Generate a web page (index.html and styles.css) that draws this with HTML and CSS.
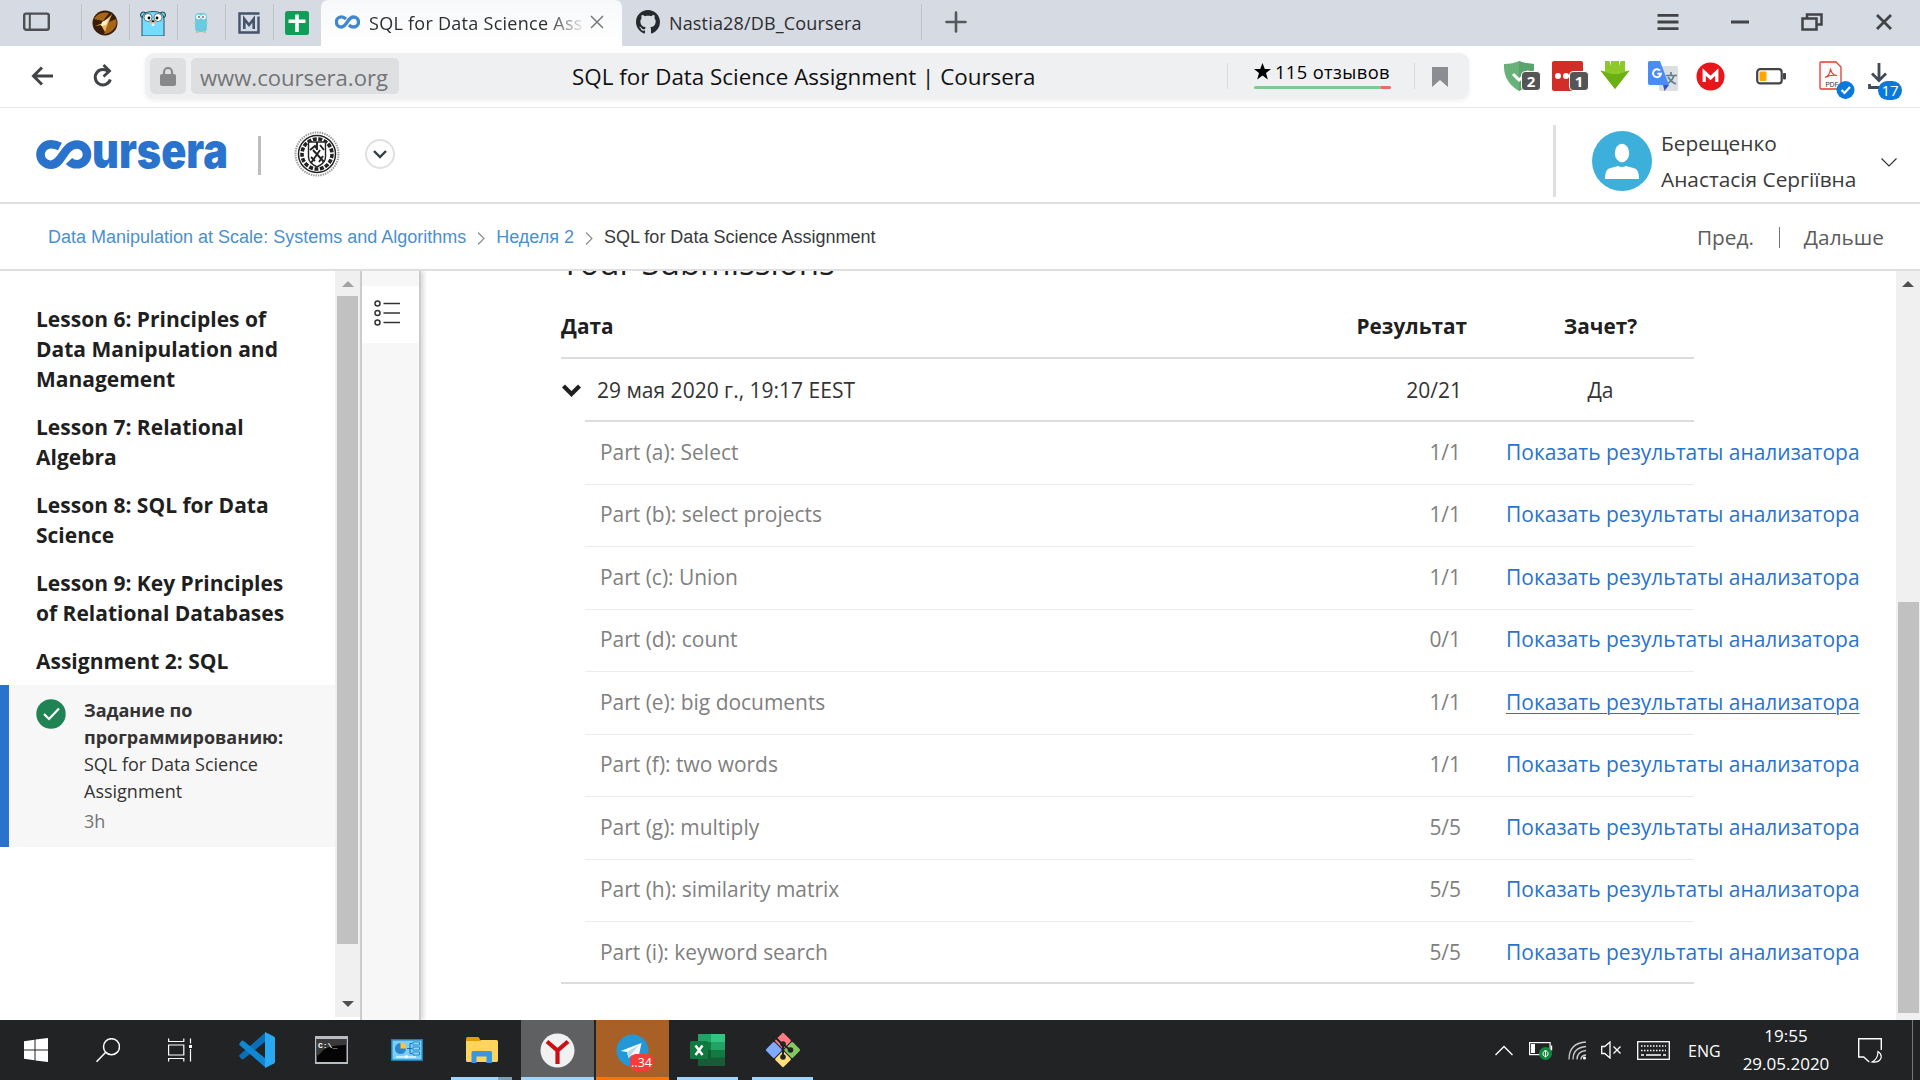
FILE: index.html
```html
<!DOCTYPE html>
<html lang="ru">
<head>
<meta charset="utf-8">
<title>SQL for Data Science Assignment | Coursera</title>
<link rel="stylesheet" href="styles.css">
</head>
<body>
<div class="screen">

<div class="tabstrip">
  <div class="panel-toggle"><svg width="28" height="20" viewBox="0 0 28 20" fill="none" stroke="#4d4f53" stroke-width="2.4"><rect x="1.2" y="1.6" width="24.6" height="16.2" rx="2"/><path d="M6.8 2v16" stroke-width="2"/></svg></div>
  <div class="pin"><svg width="26" height="26" viewBox="0 0 26 26"><circle cx="13" cy="13" r="12.5" fill="#3a1d08"/><path d="M2 9Q7 1 17 3l-6 8zM12 24l5-12 7-3q2 6-3 11-4 4-9 4z" fill="#a5661a"/><path d="M3 16l8-3 9-9-4 10-3 8-4-7z" fill="#f0b550"/><path d="M10 12l7-4-3 7-5 1z" fill="#fff2cf"/></svg></div>
  <div class="pin"><svg width="26" height="26" viewBox="0 0 26 26"><circle cx="3.5" cy="5" r="3" fill="#6ad7e5" stroke="#234" stroke-width="1"/><circle cx="22.5" cy="5" r="3" fill="#6ad7e5" stroke="#234" stroke-width="1"/><path d="M2 26V9Q2 1.5 13 1.5T24 9v17z" fill="#74ddff" stroke="#2b5060" stroke-width="1"/><circle cx="8" cy="7.5" r="4" fill="#fff" stroke="#345" stroke-width=".7"/><circle cx="18" cy="7.5" r="4" fill="#fff" stroke="#345" stroke-width=".7"/><circle cx="9" cy="8" r="1.4"/><circle cx="17" cy="8" r="1.4"/><ellipse cx="13" cy="12" rx="3" ry="1.8" fill="#d6b38a"/><path d="M11.8 10.5h2.4v1.5h-2.4z"/><path d="M11.8 13.5h2.4v2.5h-2.4z" fill="#fff"/></svg></div>
  <div class="pin"><svg width="16" height="22" viewBox="0 0 16 22"><rect x="2" y="1" width="12" height="19" rx="4" fill="#69cbe0"/><circle cx="5.5" cy="5" r="2.4" fill="#fff"/><circle cx="10.5" cy="5" r="2.4" fill="#fff"/><circle cx="6" cy="5" r=".8"/><circle cx="10" cy="5" r=".8"/><path d="M0 11l3-1v2zM16 11l-3-1v2zM3 19h3v2H3zM10 19h3v2h-3z" fill="#d8b99a"/></svg></div>
  <div class="pin"><svg width="22" height="22" viewBox="0 0 22 22" fill="none" stroke="#44546a"><path d="M21.5 1.5h-20v19h19V4.5" stroke-width="2.4"/><path d="M6.3 17V7l4.7 6 4.7-6v10" stroke-width="2.6"/></svg></div>
  <div class="pin"><svg width="24" height="24" viewBox="0 0 24 24"><rect width="24" height="24" rx="2.5" fill="#0f9d58"/><path d="M10.2 3.5h3.6V21h-3.6zM3.5 8.4h17V12h-17z" fill="#fff"/></svg></div>
  <div class="tab active">
    <svg width="25" height="14" viewBox="0 0 25 14" fill="none" stroke="#3f88cf" stroke-width="3.4"><path d="M11 4Q8.5 1.7 6.4 1.9A5 5 0 0 0 6.4 12C12 12 12.500 2 18.500 2a5 5 0 0 1 0 10Q16 12 14 10"/></svg>
    <span class="tab-title">SQL for Data Science Ass</span>
    <svg class="tab-close" width="14" height="14" viewBox="0 0 14 14" stroke="#77797c" stroke-width="1.5"><path d="M1 1l12 12M13 1L1 13"/></svg>
  </div>
  <div class="tab">
    <svg width="24" height="24" viewBox="0 0 16 16" fill="#24292e"><path d="M8 0C3.580 0 0 3.580 0 8c0 3.540 2.290 6.530 5.470 7.590.4.070.55-.17.55-.38 0-.19-.01-.82-.01-1.490-2.010.37-2.530-.49-2.690-.94-.09-.23-.48-.94-.82-1.130-.28-.15-.68-.52-.01-.53.63-.01 1.080.58 1.230.82.72 1.210 1.870.87 2.330.66.07-.52.28-.87.51-1.070-1.780-.2-3.640-.89-3.640-3.950 0-.87.31-1.590.82-2.150-.08-.2-.36-1.020.08-2.120 0 0 .67-.21 2.200.82.64-.18 1.320-.27 2-.27s1.360.09 2 .27c1.530-1.040 2.200-.82 2.200-.82.44 1.100.16 1.920.08 2.120.51.56.82 1.270.82 2.150 0 3.070-1.870 3.750-3.650 3.950.29.25.54.73.54 1.480 0 1.070-.01 1.930-.01 2.200 0 .21.15.46.55.38A8.010 8.010 0 0 0 16 8c0-4.420-3.580-8-8-8z"/></svg>
    <span class="tab-title">Nastia28/DB_Coursera</span>
  </div>
  <div class="new-tab"><svg width="22" height="22" viewBox="0 0 22 22" stroke="#55575b" stroke-width="2.6" stroke-linecap="round"><path d="M11 1.500v19M1.500 11h19"/></svg></div>
  <div class="window-controls" aria-hidden="true">
    <svg width="22" height="18" viewBox="0 0 22 18" stroke="#414347" stroke-width="2.800"><path d="M.5 2.400h21M.5 9h21M.5 15.600h21"/></svg>
    <svg width="18" height="18" viewBox="0 0 18 18" stroke="#414347" stroke-width="3"><path d="M0 9h18"/></svg>
    <svg width="22" height="18" viewBox="0 0 22 18" fill="none" stroke="#414347" stroke-width="2.500"><rect x="1.500" y="5.500" width="14" height="11"/><path d="M6 5V1.500h14.500v10H16"/></svg>
    <svg width="16" height="16" viewBox="0 0 16 16" stroke="#414347" stroke-width="2.800"><path d="M1 1l14 14M15 1L1 15"/></svg>
  </div>
</div>

<div class="toolbar">
  <svg class="back" width="22" height="20" viewBox="0 0 22 20" fill="none" stroke="#414347" stroke-width="3"><path d="M22 10H3M11 1.500L2.500 10l8.500 8.500"/></svg>
  <svg class="reload" width="20" height="24" viewBox="0 0 20 24" fill="none" stroke="#414347" stroke-width="3"><path d="M17.300 15.500A7.700 7.700 0 1 1 16 8.500"/><path d="M10.500 1l6 6-6 5.500" stroke-width="2.800"/></svg>
  <div class="address">
    <div class="lock"><svg width="16" height="20" viewBox="0 0 16 20"><path d="M4 9V6a4 4 0 0 1 8 0v3" fill="none" stroke="#87888a" stroke-width="2.200"/><rect x="0" y="8" width="16" height="12" rx="2" fill="#87888a"/></svg></div>
    <div class="host">www.coursera.org</div>
    <div class="page-title">SQL for Data Science Assignment | Coursera</div>
    <div class="reviews"><div class="reviews-text"><svg width="17" height="17" viewBox="0 0 17 17"><path d="M8.500 0l2.300 6H17l-5 3.900 1.800 6.600-5.300-4-5.300 4L5 9.900 0 6h6.200z"/></svg>115 отзывов</div><div class="reviews-bar"></div></div>
    <div class="bookmark"><svg width="16" height="20" viewBox="0 0 16 20"><path d="M0 0h16v20l-8-7-8 7z" fill="#8c8d90"/></svg></div>
  </div>
  <div class="extensions">
    <div class="ext e1"><svg width="30" height="30" viewBox="0 0 30 30"><path d="M0 3Q9 3 15 0q6 3 15 3 1 18-15 27Q-1 21 0 3z" fill="#67b279"/><path d="M15 0q6 3 15 3 1 18-15 27z" fill="#5aa36c"/><path d="M9 13l6 6 10-9" fill="none" stroke="#fff" stroke-width="3"/></svg><b class="badge">2</b></div>
    <div class="ext e2"><svg width="31" height="30" viewBox="0 0 31 30"><rect width="31" height="30" rx="2" fill="#d32d27"/><circle cx="6" cy="15" r="3" fill="#fff"/><circle cx="14" cy="15" r="3" fill="#fff"/></svg><b class="badge">1</b></div>
    <div class="ext e3"><svg width="30" height="30" viewBox="0 0 30 30"><path d="M5 0h4.500l1.500 5V0h8v5l1.500-5H25v10.500l4.500-1L15 28 .5 9.500l4.500 1z" fill="#8cc92b"/><path d="M.5 9.500L11 13V5v8h8V5v8l10.500-3.500L15 28z" fill="#6cb013"/></svg></div>
    <div class="ext e4"><svg width="30" height="30" viewBox="0 0 30 30"><rect x="11" y="5" width="19" height="25" rx="1.500" fill="#dcdfe2"/><path d="M23 11v3M18 14.500H29M26 14.500q-2 6-8 9M20 16q3 5 8 7" stroke="#607d8b" stroke-width="1.700" fill="none"/><path d="M15 24h6l-4.500 6z" fill="#3a53c5"/><path d="M1.500 0H12l9 24H1.500Q0 24 0 22V1.500Q0 0 1.500 0z" fill="#4b8bf5"/><path d="M12 9.500a4 4 0 1 0 1 3.200H9.300" fill="none" stroke="#fff" stroke-width="1.900"/></svg></div>
    <div class="ext e5"><svg width="29" height="29" viewBox="0 0 29 29"><circle cx="14.500" cy="14.500" r="14" fill="#e8151a"/><path d="M8.200 20V10l6.300 6 6.300-6v10" fill="none" stroke="#fff" stroke-width="3.200"/></svg></div>
    <div class="ext e6"><svg width="30" height="17" viewBox="0 0 30 17"><rect x="1.200" y="1.200" width="24.500" height="14.200" rx="3" fill="#fff" stroke="#414347" stroke-width="2.200"/><rect x="3.500" y="3.500" width="7" height="9.600" rx="1" fill="#ffa500"/><rect x="27" y="5" width="3" height="6.500" rx="1" fill="#414347"/></svg></div>
    <div class="ext e7"><svg width="36" height="38" viewBox="0 0 36 38"><path d="M2 1h15l5 5v22H2q-1 0-1-1V2q0-1 1-1z" fill="#fafafa" stroke="#e8382d" stroke-width="1.300"/><path d="M6 16.500q5-2 5.500-9 1 7 6.500 7-6-1-12 2z" fill="none" stroke="#e8382d" stroke-width="1.100"/><text x="6.500" y="25.500" class="pdf-label">PDF</text><circle cx="26.500" cy="29" r="9" fill="#0b79dc"/><path d="M22.500 29l3 3 5.500-6" fill="none" stroke="#fff" stroke-width="2.200"/></svg></div>
    <div class="ext e8"><svg width="22" height="27" viewBox="0 0 22 27" fill="none" stroke="#414b55" stroke-width="2.800"><path d="M11 0v17M4 10.500l7 7 7-7M1.500 21v3.500H11"/></svg><span class="count">17</span></div>
  </div>
</div>

<header class="site-header">
  <svg class="coursera-logo" width="192" height="40" viewBox="0 0 192 40" role="img" aria-label="Coursera">
    <path d="M25.500 11.500Q21 9.300 16.500 9.300a10.500 10.200 0 0 0 0 20.400C28 29.700 29 9.500 42.500 9.500a10 9.900 0 0 1 0 19.800Q37.500 29.300 34.500 26" fill="none" stroke="#2a73cc" stroke-width="8.600"/>
    <text x="56" y="33" textLength="136" lengthAdjust="spacingAndGlyphs" class="logo-word">ursera</text>
  </svg>
  <div class="brand-divider"></div>
  <svg class="seal" width="48" height="48" viewBox="0 0 48 48" fill="none" stroke="#222"><circle cx="24" cy="24" r="21.500" stroke="#999" stroke-width="2" stroke-dasharray="1.400 1"/><circle cx="24" cy="24" r="18.500" stroke-width="1.500"/><circle cx="24" cy="24" r="15" stroke-width="3.600" stroke-dasharray="4 1.500"/><path d="M15.500 12h17v15q0 6-8.500 10-8.500-4-8.500-10z" fill="#fff" stroke-width="1.400"/><path d="M24 12v8M18 33l9-13M31 32L20 20M17 20l5-4 2 3M27 15l4 5M18 27l4 4M30 26l-4 6" stroke-width="1.900"/></svg>
  <div class="program-menu"><svg width="14" height="9" viewBox="0 0 14 9" fill="none" stroke="#333d48" stroke-width="2.400"><path d="M1 1l6 6 6-6"/></svg></div>
  <div class="account">
    <svg width="60" height="60" viewBox="0 0 60 60"><circle cx="30" cy="30" r="30" fill="#3cafda"/><ellipse cx="30" cy="22" rx="7.200" ry="9.200" fill="#fff"/><path d="M13 48q0-9 4-10.500L26 35q4 2 8 0l9 2.500Q47 39 47 48z" fill="#fff"/></svg>
    <div class="account-name">Берещенко<br>Анастасія Сергіївна</div>
    <svg class="account-arrow" width="16" height="9" viewBox="0 0 16 9" fill="none" stroke="#333" stroke-width="1.200"><path d="M.5.500L8 8l7.500-7.500"/></svg>
  </div>
</header>

<nav class="crumbs">
  <a>Data Manipulation at Scale: Systems and Algorithms</a>
  <svg class="crumb-sep" width="8" height="13" viewBox="0 0 8 13" fill="none" stroke="#888" stroke-width="1.100"><path d="M1 .5l6 6-6 6"/></svg>
  <a>Неделя 2</a>
  <svg class="crumb-sep" width="8" height="13" viewBox="0 0 8 13" fill="none" stroke="#888" stroke-width="1.100"><path d="M1 .5l6 6-6 6"/></svg>
  <span>SQL for Data Science Assignment</span>
  <div class="pager"><span>Пред.</span><i></i><span>Дальше</span></div>
</nav>

<div class="workspace">
  <aside class="lessons">
    <h3>Lesson 6: Principles of Data Manipulation and Management</h3>
    <h3>Lesson 7: Relational Algebra</h3>
    <h3>Lesson 8: SQL for Data Science</h3>
    <h3>Lesson 9: Key Principles of Relational Databases</h3>
    <h3>Assignment 2: SQL</h3>
    <div class="current-item">
      <svg width="30" height="30" viewBox="0 0 30 30"><circle cx="15" cy="15" r="14.700" fill="#1f8354"/><path d="M8 15l5 5L23 9.500" fill="none" stroke="#fff" stroke-width="2.200"/></svg>
      <div><b>Задание по программированию:</b><br>SQL for Data Science Assignment<p>3h</p></div>
    </div>
  </aside>
  <div class="side-scroll">
    <svg width="12" height="6" viewBox="0 0 12 6"><path d="M0 6l6-6 6 6z" fill="#a3a3a3"/></svg>
    <div class="side-thumb"></div>
    <svg class="down" width="12" height="6" viewBox="0 0 12 6"><path d="M0 0l6 6 6-6z" fill="#505050"/></svg>
  </div>
  <div class="rail"><div class="rail-button"><svg width="26" height="26" viewBox="0 0 26 26" fill="none" stroke="#333" stroke-width="1.500"><circle cx="3.500" cy="3.500" r="2.500"/><circle cx="3.500" cy="13" r="2.500"/><circle cx="3.500" cy="22.500" r="2.500"/><path d="M9.500 3.500H26M9.500 13H26M9.500 22.500H26"/></svg></div></div>
  <main class="content">
    <h2>Your Submissions</h2>
    <div class="row head"><span class="c-name">Дата</span><span class="c-score">Результат</span><span class="c-pass">Зачет?</span></div>
    <div class="row attempt"><svg width="19" height="13" viewBox="0 0 19 13" fill="none" stroke="#1f1f1f" stroke-width="4.200"><path d="M1.500 2l8 8 8-8"/></svg><span class="c-name">29 мая 2020 г., 19:17 EEST</span><span class="c-score">20/21</span><span class="c-pass">Да</span></div>
    <div class="parts">
      <div class="row part"><span class="c-name">Part (a): Select</span><span class="c-score">1/1</span><a>Показать результаты анализатора</a></div>
      <div class="row part"><span class="c-name">Part (b): select projects</span><span class="c-score">1/1</span><a>Показать результаты анализатора</a></div>
      <div class="row part"><span class="c-name">Part (c): Union</span><span class="c-score">1/1</span><a>Показать результаты анализатора</a></div>
      <div class="row part"><span class="c-name">Part (d): count</span><span class="c-score">0/1</span><a>Показать результаты анализатора</a></div>
      <div class="row part"><span class="c-name">Part (e): big documents</span><span class="c-score">1/1</span><a class="hovered">Показать результаты анализатора</a></div>
      <div class="row part"><span class="c-name">Part (f): two words</span><span class="c-score">1/1</span><a>Показать результаты анализатора</a></div>
      <div class="row part"><span class="c-name">Part (g): multiply</span><span class="c-score">5/5</span><a>Показать результаты анализатора</a></div>
      <div class="row part"><span class="c-name">Part (h): similarity matrix</span><span class="c-score">5/5</span><a>Показать результаты анализатора</a></div>
      <div class="row part"><span class="c-name">Part (i): keyword search</span><span class="c-score">5/5</span><a>Показать результаты анализатора</a></div>
    </div>
    <div class="table-end"></div>
  </main>
  <div class="main-scroll"><svg width="12" height="6" viewBox="0 0 12 6"><path d="M0 6l6-6 6 6z" fill="#505050"/></svg><div class="main-thumb"></div></div>
</div>

<footer class="taskbar">
  <div class="task"><svg width="24" height="24" viewBox="0 0 24 24" fill="#fff"><path d="M0 3.300l10.500-1.500v9.700H0zM11.500 1.600L24 0v11.500H11.500zM0 12.500h10.500v9.700L0 20.700zM11.500 12.500H24V24l-12.500-1.600z"/></svg></div>
  <div class="task"><svg width="24" height="24" viewBox="0 0 24 24" fill="none" stroke="#fff" stroke-width="1.500"><circle cx="15.500" cy="8.700" r="8"/><path d="M9.500 14.500L.5 23.800"/></svg></div>
  <div class="task"><svg width="24" height="24" viewBox="0 0 24 24" fill="none" stroke="#fff" stroke-width="1.200"><path d="M.6.500v3h15.200v-3M.6 23.500v-3h15.200v3M.6 7h15.200v10H.6zM22.500.5v5M22.500 11v12.500"/><path d="M21 7h3v3h-3z" fill="#fff" stroke="none"/></svg></div>
  <div class="task wide"><svg width="36" height="36" viewBox="0 0 36 36"><path d="M0 24l2.500 3q1 .8 2.200 0L27 9V0L1 22.500q-1.500 1 0 2.500z" fill="#0a6fb8"/><path d="M0 12l2.500-3q1-.8 2.200 0L27 27v9L1 13.500q-1.500-1 0-2.500z" fill="#0f87d2"/><path d="M26 36l9-4.400q1-.6 1-2V6.400q0-1.400-1-2L26 0z" fill="#2aa8f2"/></svg></div>
  <div class="task wide"><svg width="33" height="28" viewBox="0 0 33 28"><rect width="33" height="28" fill="#b9bcc2"/><rect x="1.500" y="3" width="30" height="23" fill="#050505"/><path d="M1.500 3h30v6Q10 9 5 18l-3.500 2z" fill="#3a3a3a"/><text x="3" y="11.500" class="cmd-label">C:\_</text></svg></div>
  <div class="task wide"><svg width="32" height="22" viewBox="0 0 32 22"><rect width="32" height="22" fill="#1b7fb3"/><rect x="1.500" y="1.500" width="29" height="19" fill="#7ccdf8"/><circle cx="9.500" cy="9.500" r="5.500" fill="#2a86cf"/><path d="M9.500 9.500V3.500a6 6 0 0 1 6 6z" fill="#ffc23a"/><path d="M16 9.500h3V4.500h2M19 9.500h2M19 9.500v5h2" fill="none" stroke="#146fae"/><path d="M22 3h6.500v3H22zM22 8h6.500v3H22zM22 13h6.500v3H22z" fill="#8fd6fb" stroke="#2788c6"/><path d="M5 18h20" stroke="#fff" stroke-width="1.200"/><circle cx="15.500" cy="17.700" r="1.600" fill="#fff"/></svg></div>
  <div class="task wide open split"><svg width="32" height="26" viewBox="0 0 32 26"><path d="M0 1.500Q0 0 1.500 0H12q1.500 0 2 3v3H0z" fill="#e09d00"/><path d="M0 4h13l2-1h15.500Q32 3 32 4.500V23.500Q32 25 30.500 25h-29Q0 25 0 23.500z" fill="#ffd45c"/><path d="M5.500 26V15.500Q5.500 14 7 14h17.500q1.500 0 1.500 1.500V26h-5.500v-6.500h-10V26z" fill="#3a96dd"/></svg></div>
  <div class="task wide open selected"><svg width="35" height="35" viewBox="0 0 35 35"><circle cx="17.500" cy="17.500" r="17" fill="#f1f1f1"/><path d="M7 8.500l10.500 9 10.500-9M17.500 17v14" fill="none" stroke="#cb1014" stroke-width="4.200"/></svg></div>
  <div class="task wide alert"><svg width="33" height="33" viewBox="0 0 33 33"><circle cx="16.500" cy="16.500" r="16" fill="#2497d8"/><path d="M4.500 17L25.500 9 22 25.500l-6-4.500-3.500 3-1.500-6z" fill="#f4f8fb"/><path d="M12.500 24l-1.500-6L23 11l-8 9.500z" fill="#bed6e5"/></svg><span class="unread">..34</span></div>
  <div class="task wide open inset"><svg width="35" height="32" viewBox="0 0 35 32"><path d="M8 0h27v8H8z" fill="#21a366"/><path d="M21 0h14v8H21z" fill="#33c481"/><path d="M8 8h13.500v8H8z" fill="#107c41"/><path d="M21 8h14v8H21z" fill="#21a366"/><path d="M8 16h27v16H8z" fill="#185c37"/><path d="M21 16h14v7.500H21z" fill="#107c41"/><rect y="7" width="18" height="18" rx="1.500" fill="#0e7a40"/><path d="M5.500 11.500l7 9.500M12.500 11.500l-7 9.500" stroke="#fff" stroke-width="2.500"/></svg></div>
  <div class="task wide open inset"><svg width="36" height="36" viewBox="0 0 36 36"><g transform="rotate(45 18 18)"><rect x="5.500" y="5.500" width="12" height="12" rx="1.500" fill="#ff7b80"/><rect x="18.500" y="5.500" width="12" height="12" rx="1.500" fill="#83c863"/><rect x="5.500" y="18.500" width="12" height="12" rx="1.500" fill="#80aaff"/><rect x="18.500" y="18.500" width="12" height="12" rx="1.500" fill="#ffe07a"/></g><path d="M11 6l7 7v12M18 12l7 6" fill="none" stroke="#212325" stroke-width="2"/><circle cx="18" cy="12" r="2.800" fill="#212325"/><circle cx="25.500" cy="18" r="2.800" fill="#212325"/><circle cx="18" cy="25" r="2.800" fill="#212325"/></svg></div>
  <div class="tray">
    <svg class="t-up" width="18" height="11" viewBox="0 0 18 11" fill="none" stroke="#fff" stroke-width="1.400"><path d="M.5 10L9 1.500l8.500 8.500"/></svg>
    <svg class="t-bat" width="24" height="20" viewBox="0 -1 24 20"><rect x=".6" y=".6" width="20.500" height="12" fill="none" stroke="#fff" stroke-width="1.200"/><path d="M2 2h4v9H2zM22 3.500h1.200v5H22z" fill="#fff"/><circle cx="16.500" cy="11.500" r="6.500" fill="#10893e"/><path d="M16.500 15.500v-7.500q-3.500 3-2.500 5 1 1.500 2.500 1.500t2.500-1.500q1-2-2.500-5" fill="none" stroke="#fff"/></svg>
    <svg class="t-wifi" width="19" height="19" viewBox="0 0 19 19" fill="none" stroke="#ccc" stroke-width="1.300"><path d="M1 18.500Q1 2 18 1M5 18.500Q5 6.500 18 5.500M9 18.500q0-8 9-9M13 18.500q0-4 5-4.500"/><circle cx="16.500" cy="17" r="1.600" fill="#fff" stroke="none"/></svg>
    <svg class="t-vol" width="21" height="18" viewBox="0 0 21 18" fill="none" stroke="#fff" stroke-width="1.300"><path d="M.7 5.500h3L9 1v16l-5.300-4.500h-3zM12.500 5.500l7 7M19.500 5.500l-7 7"/></svg>
    <svg class="t-key" width="33" height="19" viewBox="0 0 33 19" fill="none" stroke="#fff"><rect x=".7" y=".7" width="31.600" height="17.600" stroke-width="1.300"/><path d="M4 5h25M4 9.500h25" stroke-width="1.500" stroke-dasharray="1.500 1.500"/><path d="M4 14h3M9 14h15M26 14h3" stroke-width="1.400"/></svg>
    <span class="lang">ENG</span>
    <div class="clock">19:55<br>29.05.2020</div>
    <svg class="t-note" width="25" height="25" viewBox="0 0 25 25" fill="none" stroke="#fff" stroke-width="1.400"><path d="M23.300 12V.7H.7V19h5l5.500 5"/><path d="M20 13.500q4 2.500 3 6.500-2 5-9 4 6-3 6-10.500z" stroke-width="1.200"/></svg>
    <div class="peek"></div>
  </div>
</footer>
</div>
</body>
</html>
```
FILE: styles.css
```css
* { box-sizing: border-box; }
body { margin: 0; background: #fff; font-family: "Open Sans", "Noto Sans", sans-serif; color: #1f1f1f; }
svg { display: block; flex: none; }
h2, h3, p { margin: 0; }
.screen { width: 1920px; height: 1080px; display: flex; flex-direction: column; overflow: hidden; }

/* Browser tabs */
.tabstrip { height: 46px; flex: none; display: flex; background: #d6dae2; }
.panel-toggle { width: 81px; padding: 12px 0 0 23px; }
.pin { width: 48px; height: 45px; display: flex; align-items: center; justify-content: center; background: linear-gradient(#c0c3ca, #c0c3ca) 0 4px / 1px 36px no-repeat; }
.tab { width: 300px; height: 46px; display: flex; align-items: center; padding: 0 0 2px 14px; font-size: 18px; color: #2d2e30; }
.tab.active { width: 301px; padding-left: 14px; background: linear-gradient(#f7f8fa, #fff); border-radius: 7px 7px 0 0; }
.tab.active .tab-title { width: 216px; margin-left: 9px; letter-spacing: .27px; white-space: nowrap; overflow: hidden; -webkit-mask: linear-gradient(90deg, #000 82%, transparent 101%); mask: linear-gradient(90deg, #000 82%, transparent 101%); }
.tab-close { margin-left: 5px; }
.tab .tab-title { position: relative; top: 1px; margin-left: 9px; letter-spacing: .16px; }
.new-tab { margin-left: -1px; padding: 11px 0 0 24px; width: 60px; background: linear-gradient(#c0c3ca, #c0c3ca) 0 4px / 1px 36px no-repeat; }
.window-controls { margin-left: auto; padding-right: 28px; display: flex; align-items: center; height: 44px; }
.window-controls svg + svg { margin-left: 52px; }
.window-controls svg:nth-child(4) { margin-left: 53px; }

/* Address bar */
.toolbar { height: 62px; flex: none; display: flex; padding-top: 7px; border-bottom: 1px solid #e8e9ea; }
.back { margin: 13px 0 0 31px; }
.reload { margin: 11px 0 0 40px; }
.address { width: 1324px; height: 46px; margin-left: 32px; display: flex; align-items: center; padding-left: 5px; border-radius: 9px; background: #eff0f2; box-shadow: 0 2px 5px #f0f0f0; }
.lock { width: 36px; height: 36px; border-radius: 5px; background: #dedfe1; display: flex; align-items: center; justify-content: center; }
.host { width: 208px; height: 36px; margin-left: 5px; padding-left: 9px; border-radius: 5px; background: #dedfe1; color: #737477; font-size: 22.100px; line-height: 38px; }
.page-title { width: 655px; margin-left: 173px; padding-top: 2px; font-size: 22.400px; line-height: 36px; color: #111; white-space: nowrap; }
.reviews { width: 187px; height: 26px; padding-left: 26px; border-left: 1px solid #d9dadc; }
.reviews-text { display: flex; align-items: center; gap: 4px; height: 26px; margin-top: -5px; font-size: 18.300px; letter-spacing: .4px; color: #000; white-space: nowrap; }
.reviews-bar { width: 137px; height: 3px; margin-top: 2px; border-radius: 2px; background: linear-gradient(90deg, #7ecb91 93%, #ee6c60 93%); }
.bookmark { height: 26px; padding: 4px 0 0 17px; border-left: 1px solid #d9dadc; }
.extensions { display: flex; padding-top: 8px; }
.ext { position: relative; }
.e1 { margin-left: 35px; }
.e2 { margin-left: 18px; }
.e3 { margin-left: 17px; }
.e4 { margin-left: 18px; }
.e5 { margin-left: 18px; padding-top: 1px; }
.e6 { margin-left: 31px; padding-top: 7px; }
.e7 { margin-left: 33px; }
.e8 { margin-left: 13px; padding-top: 2px; }
.badge { position: absolute; left: 17px; top: 10px; width: 20px; height: 20px; border: 1px solid #fff; border-radius: 4px; background: #555; color: #fff; font: 700 15px/18px "Open Sans", sans-serif; text-align: center; }
.count { position: absolute; left: 10px; top: 20px; width: 24px; height: 19px; border-radius: 10px; background: #0b79dc; color: #fff; font-size: 15px; line-height: 18px; text-align: center; }
.pdf-label { font: 400 6.500px "Liberation Sans", sans-serif; fill: #333; }

/* Coursera header */
.site-header { height: 96px; flex: none; display: flex; border-bottom: 2px solid #dfdfdf; }
.coursera-logo { margin: 27px 0 0 36px; overflow: visible; }
.coursera-logo path { transform: translate(-1.500px, 0); }
.logo-word { font: 900 49px "Inter", sans-serif; fill: #2a73cc; }
.brand-divider { width: 3px; height: 39px; margin: 28px 0 0 30px; background: #bdbdbd; }
.seal { margin: 22px 0 0 32px; }
.program-menu { width: 30px; height: 30px; margin: 31px 0 0 24px; border: 2px solid #e0e0e0; border-radius: 50%; display: flex; align-items: center; justify-content: center; }
.account { height: 72px; margin: 17px 23px 0 auto; padding-left: 36px; border-left: 3px solid #dfdfdf; display: flex; align-items: center; }
.account-name { width: 220px; margin-left: 9px; padding-bottom: 1px; font-size: 20.850px; line-height: 36px; color: #3a3a3a; }
.account-arrow { margin-top: 2px; }

/* Breadcrumbs */
.crumbs { height: 67px; flex: none; display: flex; align-items: center; padding: 0 36px 0 48px; border-bottom: 2px solid #dfdfdf; font: 18px/24px "Liberation Sans", Arial, sans-serif; color: #373a3c; white-space: nowrap; }
.crumbs a { color: #4a90cf; }
.crumb-sep { margin: 4px 11px 0 11px; }
.pager { margin-left: auto; display: flex; align-items: center; font: 20.800px/30px "Open Sans", sans-serif; color: #5c5c5c; }
.pager i { width: 1px; height: 21px; margin: 2px 24px 0 25px; background: #757575; }

/* Course navigation */
.workspace { height: 749px; flex: none; display: flex; }
.lessons { width: 335px; padding-top: 33px; }
.lessons h3 { margin-bottom: 18px; padding: 0 40px 0 36px; font-size: 21px; font-weight: 700; line-height: 30px; color: #1f1f1f; }
.current-item { height: 162px; margin-top: -9px; padding: 12px 20px 0 27px; border-left: 9px solid #2a73cc; background: #f7f7f7; display: flex; gap: 18px; font-size: 18px; line-height: 27px; color: #333; }
.current-item svg { margin-top: 2px; }
.current-item p { margin-top: 3px; color: #757575; }
.side-scroll { width: 25px; height: 746px; display: flex; flex-direction: column; align-items: center; padding: 10px 0; background: #f0f0f0; }
.side-thumb { width: 21px; height: 648px; margin-top: 9px; background: #c1c1c1; }
.side-scroll .down { margin-top: auto; }
.rail { width: 61px; padding-top: 15px; border-left: 2px solid #ccc; border-right: 2px solid #ccc; background: #f7f7f7; box-shadow: 3px 0 4px #ddd; }
.rail-button { height: 57px; border-radius: 3px; background: #fff; padding: 14px 0 0 12px; }

/* Submissions: the pane is scrolled, so its title is mostly above the edge */
.content { flex: 1; min-width: 0; padding-left: 140px; overflow: hidden; }
h2 { height: 45px; margin: -31px 0 1px; font-size: 33px; font-weight: 400; line-height: 45px; white-space: nowrap; }
.row { width: 1133px; display: flex; align-items: center; font-size: 21px; line-height: 30px; white-space: nowrap; }
.c-score { width: 110px; text-align: right; }
.c-name { flex: 1; }
.head { height: 73px; padding-top: 9px; border-bottom: 2px solid #dcdcdc; font-size: 20.800px; font-weight: 700; }
.head .c-score { width: 115px; }
.c-pass { text-align: center; }
.head .c-pass { width: 227px; padding-left: 40px; }
.attempt { height: 63px; padding-bottom: 2px; color: #333; background: linear-gradient(#dcdcdc, #dcdcdc) 24px 100% / 1109px 2px no-repeat; }
.attempt svg { margin: 1px 16px 0 1px; }
.attempt .c-pass { width: 232px; padding-left: 45px; }
.parts { margin-left: 24px; }
.part { width: 1109px; height: 62.500px; padding: 0 0 2px 15px; border-bottom: 1px solid #ececec; color: #808080; font-size: 20.950px; }
.part:last-child { border-bottom: 0; height: 60px; padding-bottom: 0; }
.part a { width: 188px; margin-left: 45px; color: #2a73cc; font-size: 21px; }
.part .c-score { margin-right: 0; }
.hovered { text-decoration: underline; text-decoration-thickness: 1px; text-underline-offset: 3px; }
.table-end { width: 1133px; height: 2px; background: #dcdcdc; }
.main-scroll { width: 24px; padding: 10px 2px 0 2px; background: #f0f0f0; display: flex; flex-direction: column; align-items: center; }
.main-thumb { width: 21px; height: 411px; margin-top: 315px; background: #c1c1c1; }

/* Taskbar */
.taskbar { height: 60px; flex: none; display: flex; background: #212325; }
.task { position: relative; width: 72px; height: 60px; display: flex; align-items: center; justify-content: center; }
.task.wide { width: 73px; margin-right: 2px; }
.task:nth-child(3) { margin-right: 4px; }
.task:nth-child(7) { margin-right: 3px; }
.open { background: linear-gradient(#a2d3fb, #a2d3fb) 50% 100% / 61px 3px no-repeat; }
.split { background: linear-gradient(90deg, #a2d3fb 77%, #7f9fb6 77%) 50% 100% / 61px 3px no-repeat; }
.selected { background: linear-gradient(#a2d3fb, #a2d3fb) 0 100% / 100% 3px no-repeat #5e6062; }
.alert { background: linear-gradient(#ff7300, #ff7300) 0 100% / 100% 3px no-repeat #a86027; }
.unread { position: absolute; left: 34px; top: 34px; width: 23px; height: 17px; border-radius: 6px; background: #f23d3b; color: #fff; font-size: 12.500px; line-height: 17px; text-align: center; }
.cmd-label { font: 700 8px "Liberation Mono", monospace; fill: #fff; }
.tray { margin-left: auto; display: flex; align-items: center; color: #fff; white-space: nowrap; }
.t-bat { margin: 2px 0 0 16px; }
.t-wifi { margin-left: 15px; }
.t-vol { margin-left: 14px; }
.t-key { margin-left: 15px; }
.lang { margin-left: 18px; width: 34px; padding-top: 1px; font-size: 16px; }
.clock { width: 90px; margin-left: 19px; text-align: center; font-size: 17px; line-height: 28px; }
.t-note { margin-left: 27px; }
.peek { width: 8px; height: 60px; margin-left: 29px; border-left: 1px solid #777; }
```
